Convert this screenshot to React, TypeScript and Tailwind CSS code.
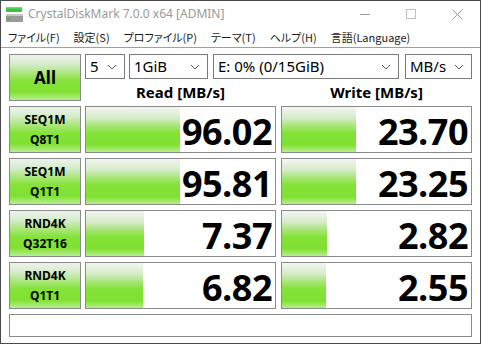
import React from "react";

type Row = {
  name: string;
  sub: string;
  read: string;
  readBar: number;
  write: string;
  writeBar: number;
};

const rows: Row[] = [
  { name: "SEQ1M", sub: "Q8T1", read: "96.02", readBar: 94, write: "23.70", writeBar: 74 },
  { name: "SEQ1M", sub: "Q1T1", read: "95.81", readBar: 94, write: "23.25", writeBar: 74 },
  { name: "RND4K", sub: "Q32T16", read: "7.37", readBar: 58, write: "2.82", writeBar: 45 },
  { name: "RND4K", sub: "Q1T1", read: "6.82", readBar: 57, write: "2.55", writeBar: 44 },
];

const menus = ["ファイル(F)", "設定(S)", "プロファイル(P)", "テーマ(T)", "ヘルプ(H)", "言語(Language)"];

const greenBtn =
  "bg-[linear-gradient(to_bottom,#eef3ec_0%,#d3ebc6_22%,#a6e674_42%,#84e238_58%,#80e132_82%,#b8ef94_100%)]";
const greenBar =
  "bg-[linear-gradient(to_bottom,#f3f5f2_0%,#d6ecc9_24%,#a3e56f_44%,#84e237_58%,#80e132_84%,#b6ee90_100%)]";

const Chevron = () => (
  <svg width="10" height="6" viewBox="0 0 10 6" className="shrink-0">
    <path d="M1 1 L5 5 L9 1" fill="none" stroke="#5a5a5a" strokeWidth="1" />
  </svg>
);

const Select = ({ value, className }: { value: string; className: string }) => (
  <div
    className={`${className} h-[25px] border border-[#7a7a7a] bg-white flex items-center justify-between pl-[4px] pr-[7px] text-[15px] text-black`}
  >
    <span>{value}</span>
    <Chevron />
  </div>
);

const DiskIcon = () => (
  <svg width="19" height="18" viewBox="0 0 19 18">
    <rect x="1" y="2" width="16" height="5" fill="#3cc23c" />
    <rect x="1" y="2" width="16" height="1.5" fill="#6fdc6f" />
    <rect x="1" y="9" width="17" height="8" fill="#9a9a9a" />
    <rect x="1" y="9" width="17" height="2" fill="#c8c8c8" />
    <rect x="2" y="13" width="3" height="2" fill="#35c435" />
  </svg>
);

const ResultCell = ({ value, bar, className = "" }: { value: string; bar: number; className?: string }) => (
  <div className={`relative h-[47px] border border-[#8a8a8a] bg-white flex items-center justify-end pr-[3px] ${className}`}>
    <div className={`absolute left-0 top-0 bottom-0 ${greenBar}`} style={{ width: bar }} />
    <span className="relative font-['Open_Sans',sans-serif] font-bold text-[36px] leading-none text-black mt-[5px] tracking-[-0.5px]">
      {value}
    </span>
  </div>
);

export default function App() {
  return (
    <div className="w-[481px] h-[344px] bg-white border border-[#4a4a4a] flex flex-col font-['Noto_Sans','Noto_Sans_CJK_JP',sans-serif] select-none">
      {/* title bar */}
      <div className="h-[26px] flex items-center shrink-0">
        <div className="pl-[4px] pr-[4px]">
          <DiskIcon />
        </div>
        <span className="text-[12px] text-[#999999]">CrystalDiskMark 7.0.0 x64 [ADMIN]</span>
        <div className="ml-auto flex items-center h-full">
          <div className="w-[46px] h-full flex items-center justify-center">
            <div className="w-[10px] h-px bg-[#9a9a9a]" />
          </div>
          <div className="w-[46px] h-full flex items-center justify-center">
            <div className="w-[10px] h-[10px] border border-[#c0c0c0]" />
          </div>
          <div className="w-[46px] h-full flex items-center justify-center">
            <svg width="11" height="11" viewBox="0 0 11 11">
              <path d="M0.5 0.5 L10.5 10.5 M10.5 0.5 L0.5 10.5" stroke="#9a9a9a" strokeWidth="1" />
            </svg>
          </div>
        </div>
      </div>

      {/* menu bar */}
      <div className="h-[21px] flex items-center border-b border-[#a0a0a0] shrink-0">
        {menus.map((m) => (
          <span
            key={m}
            className="px-[7px] text-[11px] text-[#1a1a1a] font-['Noto_Sans_CJK_JP','Noto_Sans',sans-serif] [font-feature-settings:'palt']"
          >
            {m}
          </span>
        ))}
      </div>

      {/* body */}
      <div className="flex-1 pl-[8px] pr-[8px] pt-[6px] flex flex-col">
        <div className="grid grid-cols-[72px_191px_192px] gap-x-[4px] gap-y-[5px]">
          <div
            className={`h-[47px] border border-[#8a8a8a] ${greenBtn} flex items-center justify-center text-[17px] font-bold text-black`}
          >
            All
          </div>
          <div className="col-span-2 flex flex-col">
            <div className="flex">
              <Select value="5" className="w-[40px]" />
              <Select value="1GiB" className="w-[79px] ml-[4px]" />
              <Select value="E: 0% (0/15GiB)" className="w-[186px] ml-[5px]" />
              <Select value="MB/s" className="w-[67px] ml-[6px]" />
            </div>
            <div className="flex mt-[4px] h-[18px] items-center">
              <div className="w-[191px] text-center text-[15px] font-bold text-black">Read [MB/s]</div>
              <div className="w-[191px] ml-[5px] text-center text-[15px] font-bold text-black">Write [MB/s]</div>
            </div>
          </div>
          {rows.map((r, i) => (
            <React.Fragment key={i}>
              <div
                className={`h-[47px] border border-[#8a8a8a] ${greenBtn} flex flex-col items-center justify-center text-[12px] font-bold leading-[20px] text-black`}
              >
                <span>{r.name}</span>
                <span>{r.sub}</span>
              </div>
              <ResultCell value={r.read} bar={r.readBar} />
              <ResultCell value={r.write} bar={r.writeBar} className="ml-[1px]" />
            </React.Fragment>
          ))}
        </div>
        <div className="mt-[5px] h-[23px] w-[463px] border border-[#8a8a8a] bg-white" />
      </div>
    </div>
  );
}
